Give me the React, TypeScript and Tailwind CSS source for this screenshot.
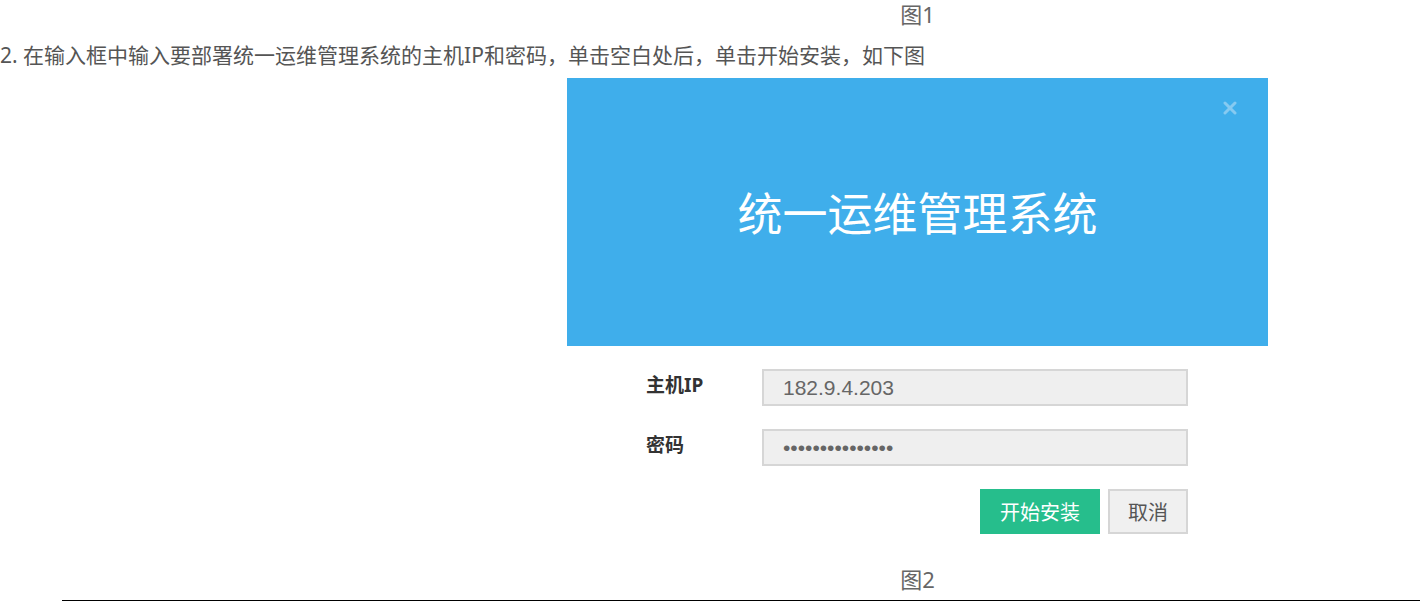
import React from "react";

const cjk = "font-['Noto_Sans','Noto_Sans_CJK_SC',sans-serif]";

const FormRow: React.FC<{ label: string; children: React.ReactNode }> = ({ label, children }) => (
  <div className="grid grid-cols-[116px_1fr] items-center">
    <span className="text-[19px] font-bold text-[#333] leading-none -mt-[4px]">{label}</span>
    <div className="h-[37px] border-2 border-[#d6d6d6] bg-[#efefef] pl-[19px] flex items-center text-[#666] font-['Liberation_Sans',sans-serif]">
      {children}
    </div>
  </div>
);

export default function App() {
  return (
    <div className={`w-[1420px] h-[601px] bg-white flex flex-col ${cjk}`}>
      {/* 图1 caption */}
      <div className="ml-[567px] w-[701px] text-center text-[22px] leading-[28px] text-[#666]">图1</div>

      <p className="mt-[14px] text-[21px] leading-[26px] text-[#555] whitespace-nowrap">
        2. 在输入框中输入要部署统一运维管理系统的主机IP和密码，单击空白处后，单击开始安装，如下图
      </p>

      {/* dialog screenshot */}
      <div className="ml-[567px] w-[701px] mt-[10px] bg-white">
        <div className="relative h-[268px] bg-[#3faeeb] flex items-center justify-center">
          <span className="text-white text-[45px] leading-none mt-[2px]">统一运维管理系统</span>
          <svg
            className="absolute right-[31px] top-[23px]"
            width="14"
            height="14"
            viewBox="0 0 14 14"
            stroke="#86caf1"
            strokeWidth="3"
            strokeLinecap="round"
          >
            <line x1="2" y1="2" x2="12" y2="12" />
            <line x1="12" y1="2" x2="2" y2="12" />
          </svg>
        </div>

        <div className="pl-[79px] pr-[80px] pt-[23px] pb-[6px] flex flex-col gap-[23px]">
          <FormRow label="主机IP">
            <span className="text-[21px] leading-none">182.9.4.203</span>
          </FormRow>
          <FormRow label="密码">
            <span className="text-[21px] leading-none">•••••••••••••••</span>
          </FormRow>
          <div className="flex justify-end gap-[8px]">
            <button className="w-[120px] h-[45px] bg-[#26be8c] text-white text-[20px] flex items-center justify-center pt-[3px]">
              开始安装
            </button>
            <button className="w-[80px] h-[45px] bg-[#f0f0f0] border-2 border-[#d6d6d6] text-[#555] text-[20px] flex items-center justify-center pt-[3px]">
              取消
            </button>
          </div>
        </div>
      </div>

      {/* 图2 caption */}
      <div className="ml-[567px] w-[701px] mt-[25px] text-center text-[22px] leading-[28px] text-[#666]">图2</div>

      <div className="ml-[62px] flex-1 border-b border-black" />
    </div>
  );
}
